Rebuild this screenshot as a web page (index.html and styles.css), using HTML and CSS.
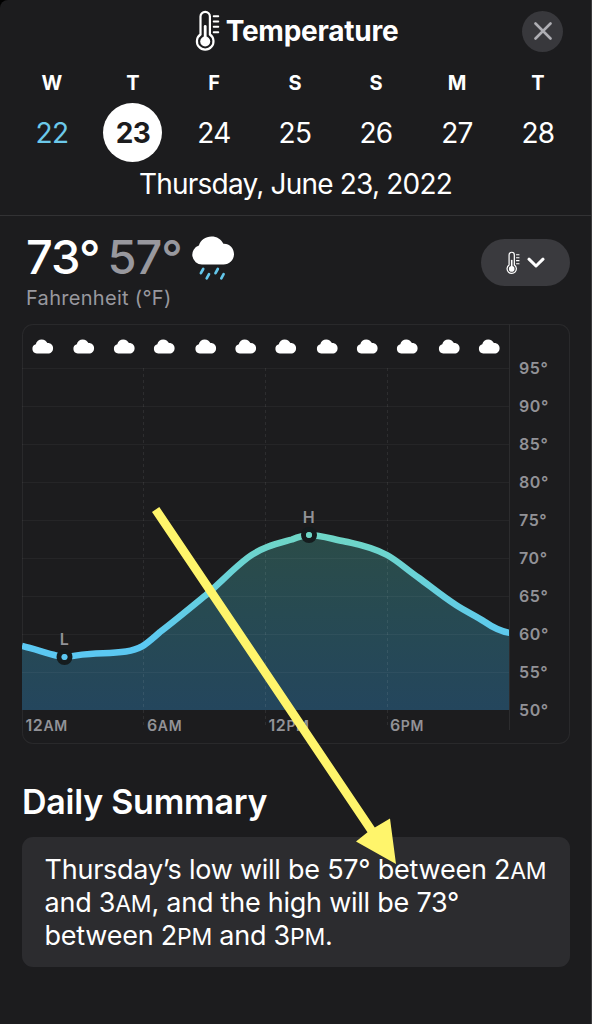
FILE: index.html
```
<!DOCTYPE html>
<html lang="en">
<head>
  <meta charset="UTF-8" />
  <title>Temperature</title>
  <meta name="viewport" content="width=device-width, initial-scale=1.0" />
  <link rel="stylesheet" href="styles.css">
</head>
<body>
  <svg class="defs" width="0" height="0">
    <symbol id="thermometer" viewBox="0 0 25 42">
      <path d="M5.500 24.500V6.500a4.700 4.700 0 0 1 9.400 0v18a8.300 8.300 0 1 1-9.400 0z" fill="none" stroke="currentColor" stroke-width="2.200" />
      <circle cx="10.200" cy="31.500" r="5" fill="currentColor" />
      <path d="M10.200 16.500V31" stroke="currentColor" stroke-width="2.800" stroke-linecap="round" />
      <path d="M18.700 6.200h4.600M18.700 11.500h4.600M18.700 16.800h4.600M18.700 22.200h4.600" stroke="currentColor" stroke-width="1.900" stroke-linecap="round" />
    </symbol>
    <symbol id="cloud" viewBox="0 0 22 15">
      <path d="M5.200 14.500a4.700 4.700 0 0 1-.9-9.200C5 2.200 7.300.4 10.200.4c2.700 0 4.700 1.400 5.700 3.700 3.200-.2 5.700 2 5.700 5.100 0 3.100-2.200 5.300-5.200 5.300z" fill="currentColor" />
    </symbol>
  </svg>

  <div class="screen">
    <header class="header">
      <div class="title-bar">
        <h1 class="title">
          <svg class="title-icon"><use href="#thermometer" /></svg>
          <span>Temperature</span>
        </h1>
        <button class="close" aria-label="Close">
          <svg width="18" height="18" viewBox="0 0 18 18"><path d="M1.500 1.500l15 15M16.500 1.500l-15 15" stroke="currentColor" stroke-width="2.600" stroke-linecap="round" /></svg>
        </button>
      </div>

      <div class="week">
        <div class="day today"><span class="weekday">W</span><span class="number">22</span></div>
        <div class="day selected"><span class="weekday">T</span><span class="number">23</span></div>
        <div class="day"><span class="weekday">F</span><span class="number">24</span></div>
        <div class="day"><span class="weekday">S</span><span class="number">25</span></div>
        <div class="day"><span class="weekday">S</span><span class="number">26</span></div>
        <div class="day"><span class="weekday">M</span><span class="number">27</span></div>
        <div class="day"><span class="weekday">T</span><span class="number">28</span></div>
      </div>
      <p class="date">Thursday, June 23, 2022</p>
    </header>

    <section class="reading">
      <div>
        <div class="temps">
          <span class="high">73°</span>
          <span class="low">57°</span>
          <svg class="rain" width="44" height="45" viewBox="0 0 44 45">
            <path d="M11 28.500A9.700 9.700 0 0 1 7.900 9.600C9.500 4 14.400.5 20.500.5c5.300 0 9.800 2.700 11.900 7.300C38.300 7.400 43 12.200 43 18c0 6-4.700 10.500-10.500 10.500z" fill="#fff" />
            <path d="M12.200 33l-2.300 4.200M18 38.200l-2.300 4.200M26.800 33l-2.300 4.200M32.600 38.200l-2.300 4.200" stroke="#63c6ea" stroke-width="2.700" stroke-linecap="round" />
          </svg>
        </div>
        <p class="unit">Fahrenheit (°F)</p>
      </div>
      <button class="picker" aria-label="Choose a measure">
        <svg class="picker-icon"><use href="#thermometer" /></svg>
        <svg width="18" height="12" viewBox="0 0 18 12"><path d="M2 2.200l7 6.800 7-6.800" fill="none" stroke="currentColor" stroke-width="3" stroke-linecap="round" stroke-linejoin="round" /></svg>
      </button>
    </section>

    <section class="chart">
      <svg width="548" height="420" viewBox="0 0 548 420">
        <defs>
          <linearGradient id="line" gradientUnits="userSpaceOnUse" x1="0" y1="210" x2="0" y2="320">
            <stop offset="0" stop-color="#6fd6c6" />
            <stop offset="0.4" stop-color="#69d2d8" />
            <stop offset="1" stop-color="#5bc8f2" />
          </linearGradient>
          <linearGradient id="area" gradientUnits="userSpaceOnUse" x1="0" y1="210" x2="0" y2="386">
            <stop offset="0" stop-color="#2b4c48" />
            <stop offset="0.45" stop-color="#274a52" />
            <stop offset="1" stop-color="#24465d" />
          </linearGradient>
          <clipPath id="plot"><rect x="0" y="44" width="487" height="342" /></clipPath>
        </defs>

        <!-- hourly conditions -->
        <g class="clouds">
          <use href="#cloud" x="9.500" y="15" width="22" height="15" />
          <use href="#cloud" x="50.500" y="15" width="22" height="15" />
          <use href="#cloud" x="91" y="15" width="22" height="15" />
          <use href="#cloud" x="131" y="15" width="22" height="15" />
          <use href="#cloud" x="172.500" y="15" width="22" height="15" />
          <use href="#cloud" x="212.500" y="15" width="22" height="15" />
          <use href="#cloud" x="252.500" y="15" width="22" height="15" />
          <use href="#cloud" x="294" y="15" width="22" height="15" />
          <use href="#cloud" x="334" y="15" width="22" height="15" />
          <use href="#cloud" x="374" y="15" width="22" height="15" />
          <use href="#cloud" x="416" y="15" width="22" height="15" />
          <use href="#cloud" x="456" y="15" width="22" height="15" />
        </g>

        <g clip-path="url(#plot)">
          <path d="M0 322C12 325 24 329 34 331.500Q38 333 42.500 333C50 333 54 330.500 68 330C86 329 92 329.200 104 327.500C120 325 124 320 138 308C150 299 168 284 184 271C200 257 212 244 226 233.500C240 223 256 219.500 270 215.500Q280 211.500 287 211C296 210.500 310 215 323 217.500C336 220.500 348 222 365 231C376 237 384 245 397 254C408 262 420 272 434 281C444 287.500 454 292 463 298C473 305 480 307.500 488 309V386H0z" fill="url(#area)" />
        </g>

        <path class="grid" d="M0 44.500H487M0 82.500H487M0 120.500H487M0 158.500H487M0 196.500H487M0 234.500H487M0 272.500H487M0 310.500H487M0 348.500H487" />
        <path class="grid dashed" d="M121.500 44V404M243.500 44V404M365.500 44V404" />
        <path class="axis" d="M487.500 0V406" />

        <g clip-path="url(#plot)">
          <path d="M0 322C12 325 24 329 34 331.500Q38 333 42.500 333C50 333 54 330.500 68 330C86 329 92 329.200 104 327.500C120 325 124 320 138 308C150 299 168 284 184 271C200 257 212 244 226 233.500C240 223 256 219.500 270 215.500Q280 211.500 287 211C296 210.500 310 215 323 217.500C336 220.500 348 222 365 231C376 237 384 245 397 254C408 262 420 272 434 281C444 287.500 454 292 463 298C473 305 480 307.500 488 309" fill="none" stroke="url(#line)" stroke-width="6.500" />
        </g>

        <circle class="marker" cx="42.500" cy="333" r="5.500" />
        <circle cx="42.500" cy="333" r="2.800" fill="#5bc8f2" />
        <circle class="marker" cx="287" cy="211" r="5.500" />
        <circle cx="287" cy="211" r="2.800" fill="#6fd6c6" />
        <text class="label" x="42.500" y="321" text-anchor="middle">L</text>
        <text class="label" x="287" y="199" text-anchor="middle">H</text>

        <g class="label">
          <text x="497" y="50">95°</text>
          <text x="497" y="88">90°</text>
          <text x="497" y="126">85°</text>
          <text x="497" y="164">80°</text>
          <text x="497" y="202">75°</text>
          <text x="497" y="240">70°</text>
          <text x="497" y="278">65°</text>
          <text x="497" y="316">60°</text>
          <text x="497" y="354">55°</text>
          <text x="497" y="392">50°</text>
        </g>
        <g class="label">
          <text x="3.500" y="407">12<tspan class="meridiem">AM</tspan></text>
          <text x="125" y="407">6<tspan class="meridiem">AM</tspan></text>
          <text x="246.500" y="407">12<tspan class="meridiem">PM</tspan></text>
          <text x="368" y="407">6<tspan class="meridiem">PM</tspan></text>
        </g>
      </svg>
    </section>

    <section class="summary">
      <h2>Daily Summary</h2>
      <p class="card">Thursday’s low will be 57° between 2<small>AM</small> and 3<small>AM</small>, and the high will be 73° between 2<small>PM</small> and 3<small>PM</small>.</p>
    </section>

    <svg class="arrow" width="250" height="366" viewBox="0 0 250 366">
      <path d="M9.300 7L2 12 217.500 332.300 206 341.500 246 364 240 318.500 224.800 327.500z" fill="#fff56b" />
    </svg>
  </div>
</body>
</html>
```

FILE: styles.css
```
* {
  box-sizing: border-box;
}
body {
  margin: 0;
  background-color: #000;
  color: #fff;
  font-family: Inter, "Liberation Sans", sans-serif;
}
h1, h2, p {
  margin: 0;
}
button {
  display: flex;
  align-items: center;
  justify-content: center;
  padding: 0;
  border: none;
  color: #fff;
  cursor: pointer;
}
svg {
  display: block;
}
.defs {
  position: absolute;
}
.screen {
  position: relative;
  height: 1024px;
  background-color: #1c1c1e;
  border-right: 1px solid #3c3c3e;
  border-top-left-radius: 8px;
  overflow: hidden;
}

/* header */
.header {
  height: 216px;
  border-bottom: 1px solid #323234;
}
.title-bar {
  display: grid;
  grid-template-columns: 42px 1fr 42px;
  align-items: center;
  height: 62px;
  padding: 0 27px 0 29px;
}
.title {
  grid-column: 2;
  display: flex;
  align-items: center;
  justify-content: center;
  gap: 6px;
  font-size: 28px;
  font-weight: 700;
  letter-spacing: -0.25px;
}
.title-icon {
  width: 25px;
  height: 42px;
}
.close {
  width: 41px;
  height: 41px;
  border-radius: 50%;
  background-color: #38383c;
  color: #aeaeb3;
}
.week {
  display: grid;
  grid-template-columns: repeat(7, 81px);
  padding-left: 11px;
}
.day {
  display: flex;
  flex-direction: column;
  align-items: center;
}
.weekday {
  height: 41px;
  line-height: 42px;
  font-size: 20px;
  font-weight: 700;
  text-indent: 1px;
}
.number {
  width: 59px;
  height: 59px;
  border-radius: 50%;
  line-height: 60px;
  text-align: center;
  text-indent: 1px;
  font-size: 28px;
  letter-spacing: -0.6px;
}
.today .number {
  color: #6cc9ea;
}
.selected .number {
  background-color: #fff;
  color: #1c1c1e;
  font-weight: 700;
}
.date {
  line-height: 44px;
  text-align: center;
  font-size: 28px;
  letter-spacing: -0.8px;
}

/* current reading */
.reading {
  display: flex;
  justify-content: space-between;
  height: 108px;
  padding: 18px 21px 0 26px;
}
.temps {
  display: flex;
  align-items: center;
  height: 46px;
  font-size: 47px;
  font-weight: 500;
  line-height: 46px;
  letter-spacing: -1px;
}
.low {
  margin-left: 8px;
  color: #98989e;
}
.rain {
  margin: 2px 0 0 9px;
}
.unit {
  margin-top: 6px;
  line-height: 24px;
  font-size: 20px;
  letter-spacing: 0.3px;
  color: #98989e;
}
.picker {
  gap: 7px;
  width: 89px;
  height: 47px;
  margin-top: 5px;
  border-radius: 24px;
  background-color: #3a3a3e;
}
.picker-icon {
  width: 14px;
  height: 24px;
}

/* hourly chart */
.chart {
  width: 548px;
  height: 420px;
  margin-left: 22px;
  border-radius: 11px;
  box-shadow: inset 0 0 0 1px #29292b;
}
.clouds {
  color: #fff;
}
.grid {
  fill: none;
  stroke: #fff;
  stroke-opacity: 0.045;
}
.dashed {
  stroke-dasharray: 3 3;
  stroke-opacity: 0.08;
}
.axis {
  stroke: #2c2c2e;
}
.marker {
  fill: none;
  stroke: #151c1e;
  stroke-width: 5;
}
.label {
  font-size: 16px;
  font-weight: 600;
  fill: #929297;
  letter-spacing: 0.6px;
}
.meridiem {
  font-size: 14px;
}

/* summary */
.summary {
  padding: 38px 21px 0 22px;
}
.summary h2 {
  line-height: 40px;
  font-size: 34px;
  font-weight: 600;
  letter-spacing: -0.25px;
}
.card {
  width: 548px;
  height: 130px;
  margin-top: 15px;
  padding: 16px 20px 0 22.5px;
  border-radius: 11px;
  background-color: #2c2c2f;
  line-height: 33px;
  font-size: 27px;
  letter-spacing: -0.24px;
}
.card small {
  font-size: 23px;
  line-height: 1;
}

/* callout pointing at the summary */
.arrow {
  position: absolute;
  left: 150px;
  top: 500px;
}
```
